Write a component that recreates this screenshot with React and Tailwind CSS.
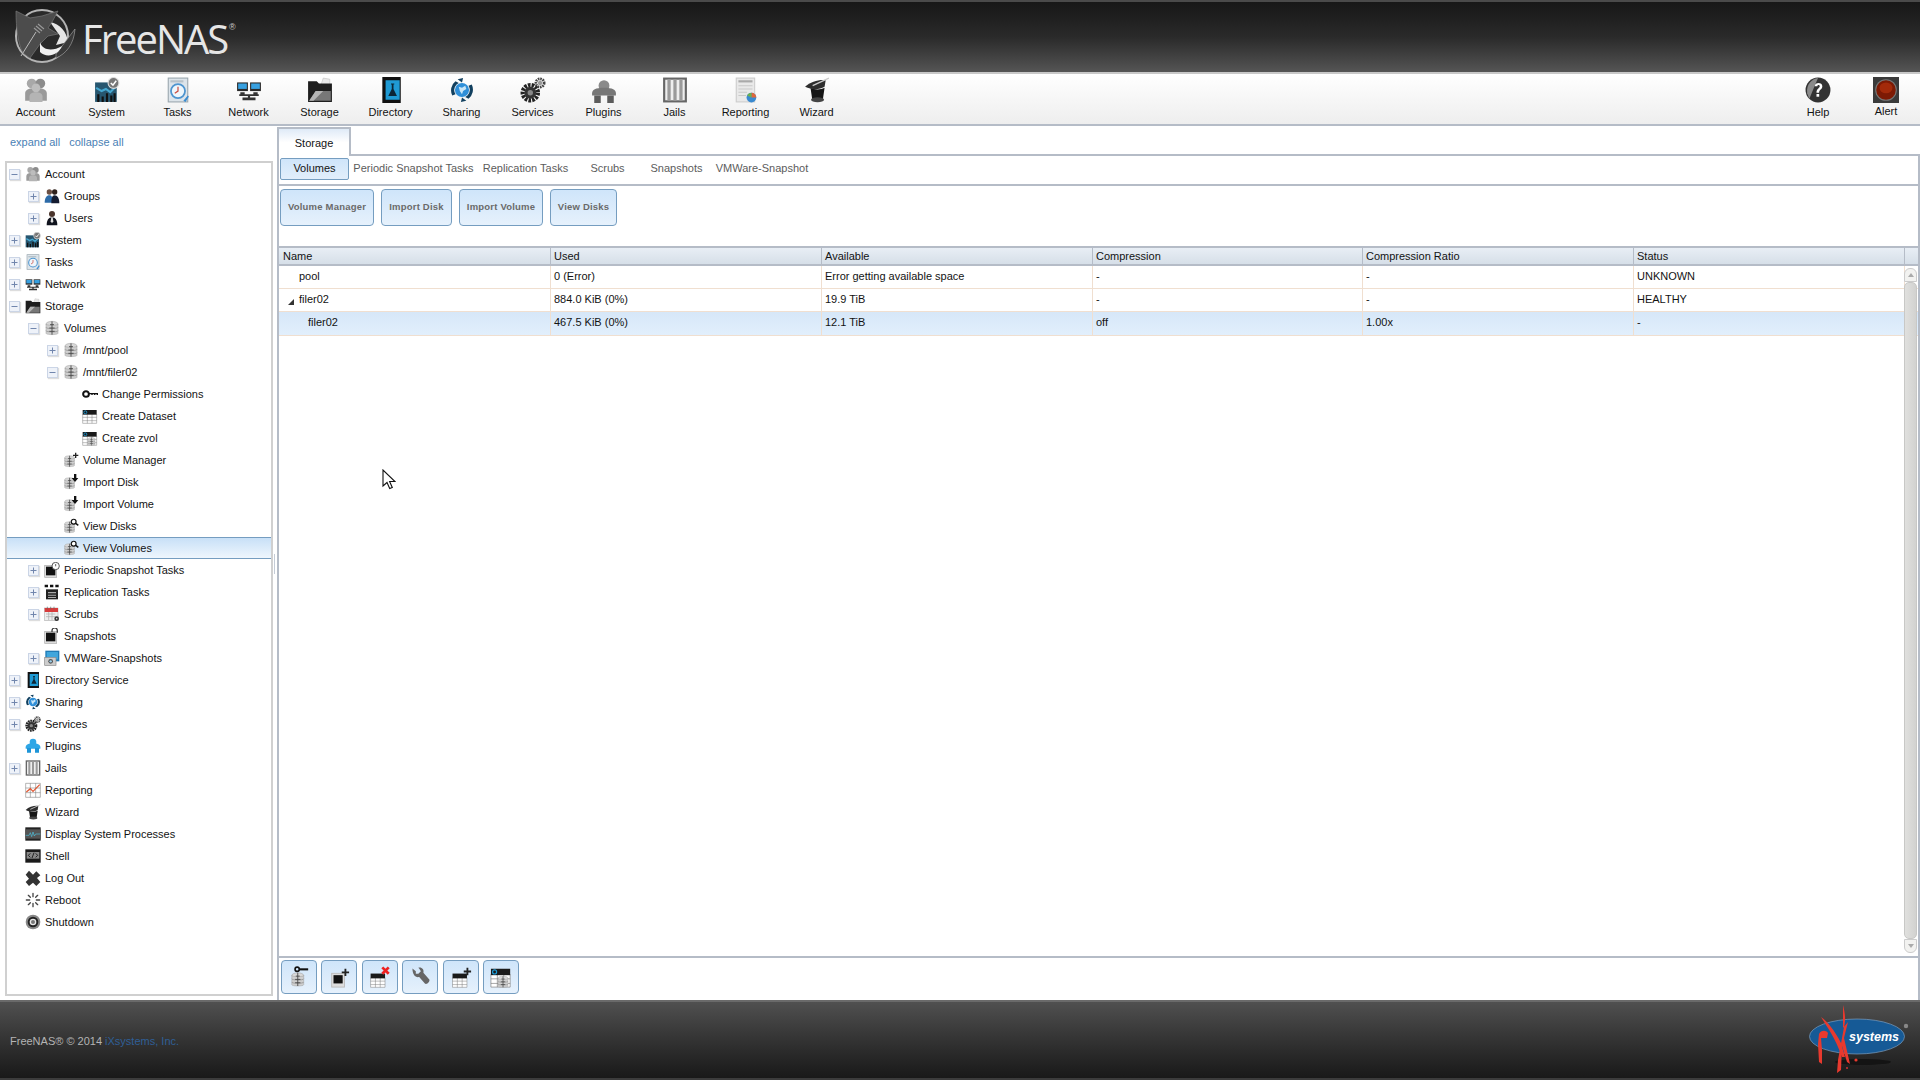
const ICONS = {
  account: (
    <>
      <circle cx="8" cy="6" r="4.5" fill="#a8a8a8" />
      <circle cx="16" cy="6" r="4.5" fill="#8c8c8c" />
      <path d="M2 22v-7c0-3 3-4.5 6-4.5s4 1 4 1 1-1 4-1 6 1.500 6 4.500v7z" fill="#9a9a9a" />
      <circle cx="12" cy="10" r="4" fill="#bdbdbd" />
      <path d="M6 23v-5c0-3 3-4 6-4s6 1 6 4v5z" fill="#b4b4b4" />
    </>
  ),
  groups: (
    <>
      <circle cx="8" cy="6" r="4" fill="#6b5044" />
      <circle cx="16" cy="6" r="4" fill="#30221c" />
      <path d="M1 22c0-7 3-11 7-11s5 3 5 11z" fill="#2d6ba8" />
      <path d="M11 23c0-7 1-12 5-12s7 4 7 12z" fill="#141c30" />
    </>
  ),
  users: (
    <>
      <circle cx="12" cy="6" r="4.500" fill="#4a352c" />
      <path d="M4 23c0-8 3-12 8-12s8 4 8 12z" fill="#10131d" />
      <path d="M11 11h2l1 6-2 3-2-3z" fill="#ddd" />
    </>
  ),
  system: (
    <>
      <rect x="1" y="5" width="20" height="18" fill="#27566f" />
      <path d="M2 10l5 3 4-2 4 3 5-5" stroke="#46a7d0" strokeWidth="2" fill="none" />
      <path d="M3 23v-7h2v7zM7 23v-5h2v5zM11 23v-8h2v8zM15 23v-6h2v6zM18 23v-8h2v8z" fill="#111" />
      <circle cx="18" cy="5.500" r="5" fill="#777" stroke="#ddd" />
      <path d="M15.500 5.500l2 2 3-4" stroke="#fff" strokeWidth="1.400" fill="none" />
    </>
  ),
  tasks: (
    <>
      <rect x="3" y="1" width="18" height="22" fill="#dce4ea" stroke="#9aa6ae" />
      <rect x="5" y="3" width="12" height="2" fill="#b8c2c9" />
      <circle cx="12" cy="13" r="6.500" fill="#eef6fb" stroke="#4d94cf" strokeWidth="1.600" />
      <path d="M12 9v4l-3 2" stroke="#cc4b3f" strokeWidth="1.100" fill="none" />
      <path d="M17 22l4-5 1 1-3 5z" fill="#3a8cd0" />
    </>
  ),
  network: (
    <>
      <rect x="1" y="5" width="10" height="8" fill="#2a2a2a" />
      <rect x="2" y="6" width="8" height="5" fill="#37a0e0" />
      <rect x="13" y="5" width="10" height="8" fill="#2a2a2a" />
      <rect x="14" y="6" width="8" height="5" fill="#37a0e0" />
      <path d="M4 14h4v2H4zM16 14h4v2h-4zM3 16h18v1.500H3zM11 17h2v2h-2zM6 19h12v2.500H6z" fill="#333" />
    </>
  ),
  storage: (
    <>
      <path d="M15 1l6 1v5h-8z" fill="#e8e8e8" stroke="#bbb" strokeWidth=".5" />
      <path d="M1 4h8l2 2h12v17H1z" fill="#1e1e1e" />
      <path d="M2 22l6-9h14v9z" fill="#777" />
      <path d="M2 22l6-9h7l-9 9z" fill="#b5b5b5" />
    </>
  ),
  directory: (
    <>
      <rect x="4" y="0" width="17" height="24" fill="#111" />
      <rect x="7" y="3" width="13" height="18" fill="#1f9ad4" />
      <path d="M12 6h3v1h-.700v4l3.200 6.500h-8L12.700 11V7H12z" fill="#0c2636" />
    </>
  ),
  sharing: (
    <>
      <circle cx="12" cy="12" r="6.500" fill="#2f8fd8" />
      <path d="M9 9l3 1 3-2 1 3-3 2-1 3-2-3z" fill="#c9e6f7" />
      <path d="M3 17a10.500 10.500 0 0 1 3-13l3 1.500-2 1.500a7.500 7.500 0 0 0-1 9zM21 7a10.500 10.500 0 0 1-3 13l-3-1.500 2-1.500a7.500 7.500 0 0 0 1-9z" fill="#12405f" />
      <path d="M8 2l5-1-1 4zM16 22l-5 1 1-4z" fill="#12405f" />
    </>
  ),
  services: (
    <>
      <circle cx="9.500" cy="14.500" r="7" fill="none" stroke="#222" strokeWidth="4" strokeDasharray="2.400 1" />
      <circle cx="9.500" cy="14.500" r="5.500" fill="#333" />
      <circle cx="9.500" cy="14.500" r="2.500" fill="#888" />
      <circle cx="18.500" cy="5.500" r="3.800" fill="none" stroke="#444" strokeWidth="2.500" strokeDasharray="1.500 .7" />
      <circle cx="18.500" cy="5.500" r="2" fill="#999" />
    </>
  ),
  plugins: (
    <>
      <circle cx="12" cy="8" r="5" fill="#8a8a8a" />
      <path d="M1 15c0-3 3-5 11-5s11 2 11 5v2H1z" fill="#777" />
      <path d="M3 17h6v7H3zM15 17h6v7h-6z" fill="#5c5c5c" />
    </>
  ),
  pluginsTree: (
    <>
      <circle cx="12" cy="6" r="5" fill="#2ea6e6" />
      <path d="M1 14c0-3 3-6 11-6s11 3 11 6v2H1z" fill="#2ea6e6" />
      <path d="M3 15h6v7H3zM15 15h6v7h-6z" fill="#1e95d8" />
    </>
  ),
  jails: (
    <>
      <rect x="1" y="0.500" width="22" height="23" fill="#666" />
      <rect x="3" y="2.500" width="18" height="19" fill="#eee" />
      <path d="M5 2h3v20H5zM10.500 2h3v20h-3zM16 2h3v20h-3z" fill="#9a9a9a" />
    </>
  ),
  report: (
    <>
      <rect x="3" y="1" width="17" height="22" fill="#e9e9e9" stroke="#ccc" />
      <rect x="5" y="3" width="13" height="2" fill="#aaa" />
      <path d="M5 8h13M5 11h13M5 14h8M5 17h7" stroke="#c9c9c9" />
      <circle cx="17" cy="19" r="4.500" fill="#3a8ad0" />
      <path d="M17 19v-4.500a4.500 4.500 0 0 1 4.500 4.500z" fill="#e0663a" />
      <path d="M17 19l-4-2a4.500 4.500 0 0 1 4-2.500z" fill="#6db14a" />
    </>
  ),
  reportTree: (
    <>
      <path d="M1 2h22v21H1zM1 9h22M1 16h22M8 2v21M16 2v21" fill="#fff" stroke="#777" strokeWidth=".8" />
      <path d="M2 15l6-5 4 4 10-10" stroke="#e2552f" strokeWidth="1.800" fill="none" />
    </>
  ),
  wizard: (
    <>
      <path d="M6 10c4 2 9 2 13 0l-1.500 10c-3 2.500-7 2.500-10 0z" fill="#161616" />
      <ellipse cx="12.500" cy="21" rx="6" ry="2.200" fill="#444" />
      <path d="M1 9c5-5 14-7 19-6l-1 6c-5 3-12 3-18 0z" fill="#2e2e2e" />
      <path d="M8 8L23 1" stroke="#ccc" strokeWidth="1.300" />
    </>
  ),
  db: <Db />,
  key: (
    <>
      <circle cx="6" cy="12" r="4.300" fill="none" stroke="#111" strokeWidth="3" />
      <path d="M10 10.500h14v3h-2v-1h-2v1h-2v-1h-2v1h-2v-1h-4z" fill="#111" />
    </>
  ),
  dataset: <Table dot />,
  zvol: (
    <>
      <Table dot />
      <g transform="translate(7 10) scale(.6)">
        <Db />
      </g>
    </>
  ),
  dbPlus: (
    <>
      <g transform="translate(0 4) scale(.82)">
        <Db />
      </g>
      <path d="M18 1h2v3h3v2h-3v3h-2V6h-3V4h3z" fill="#222" />
    </>
  ),
  dbDown: (
    <>
      <g transform="translate(0 4) scale(.82)">
        <Db />
      </g>
      <path d="M16.500 0h3.500v6h3l-5 6-5-6h3.500z" fill="#111" />
    </>
  ),
  dbView: (
    <>
      <g transform="translate(0 4) scale(.82)">
        <Db />
      </g>
      <circle cx="16" cy="5.500" r="3.600" fill="#fff" stroke="#111" strokeWidth="1.800" />
      <path d="M19 8l4 3" stroke="#111" strokeWidth="2.200" />
    </>
  ),
  snapTask: (
    <>
      <rect x="1" y="5" width="18" height="18" fill="#ddd" stroke="#aaa" />
      <path d="M3 7h14v13L3 20z" fill="#111" />
      <circle cx="17.500" cy="6" r="5.500" fill="#fff" stroke="#333" strokeWidth="1.200" />
      <path d="M17.500 3v3.500" stroke="#111" />
    </>
  ),
  repl: (
    <>
      <path d="M1 1h5v4H1zM9 1h5v4H9zM17 1h5v4h-5z" fill="#111" />
      <rect x="3" y="8" width="18" height="15" fill="#222" />
      <path d="M6 12h12v2H6zM6 16h12v1.500H6zM6 19.500h12V21H6z" fill="#aaa" />
    </>
  ),
  scrubs: (
    <>
      <rect x="1" y="3" width="20" height="19" fill="#eee" stroke="#999" strokeWidth=".7" />
      <rect x="1" y="3" width="20" height="6" fill="#d83b3b" />
      <path d="M5 1v4M10 1v4M15 1v4" stroke="#666" />
      <path d="M3 12h14M3 16h14M7 9v12M12 9v12" stroke="#aaa" />
      <circle cx="19" cy="19" r="3.500" fill="#333" />
      <circle cx="19" cy="19" r="1.200" fill="#ccc" />
    </>
  ),
  snapshot: (
    <>
      <rect x="1" y="5" width="18" height="18" fill="#ddd" stroke="#aaa" />
      <path d="M3 7h14v13H3z" fill="#111" />
      <path d="M12 6V4a4 4 0 0 1 8 0v3" fill="none" stroke="#333" strokeWidth="1.800" />
    </>
  ),
  vmware: (
    <>
      <rect x="2" y="1" width="21" height="16" fill="#1f7bb6" />
      <path d="M4 3h17v11H4z" fill="#3fa6dc" />
      <rect x="1" y="11" width="17" height="12" fill="#ccc" stroke="#888" />
      <circle cx="10" cy="17" r="3.500" fill="#555" />
      <circle cx="10" cy="17" r="1.800" fill="#9fd3f0" />
    </>
  ),
  processes: (
    <>
      <rect x="0.500" y="2" width="23" height="20" fill="#222" />
      <rect x="0.500" y="5" width="23" height="14" fill="#555" />
      <path d="M1 14h5l2-4 2 6 2-7 2 6 2-3h7" stroke="#4ec3e0" fill="none" />
    </>
  ),
  shell: (
    <>
      <rect x="0.500" y="2" width="23" height="20" fill="#1a1a1a" />
      <rect x="2.500" y="6" width="19" height="10" fill="#888" />
      <path d="M8 8l-3 3 3 3M16 8l3 3-3 3M13.500 7l-3 8" stroke="#111" strokeWidth="1.300" fill="none" />
    </>
  ),
  logout: <path d="M6 1l6 6 5-5 6 6-5 4 5 6-6 6-5-5-6 5-5-6 5-5-5-6z" fill="#333" />,
  reboot: (
    <g stroke="#444" strokeWidth="2" strokeLinecap="round">
      <path d="M12 2v5M12 17v5M2 12h5M17 12h5M5 5l3 3M16 16l3 3M19 5l-3 3M8 16l-3 3" />
    </g>
  ),
  shutdown: (
    <>
      <circle cx="12" cy="12" r="11" fill="#888" />
      <circle cx="12" cy="12" r="8" fill="#222" />
      <circle cx="12" cy="12" r="5" fill="#e8e8e8" />
      <circle cx="12" cy="12" r="3" fill="#777" />
    </>
  ),
  help: (
    <>
      <circle cx="12" cy="12" r="11.500" fill="#333" />
      <path d="M2 15C1 7 6 2 12 1L4 20z" fill="#8a8a8a" />
      <path d="M9 8.500c0-4 7-4 7 0 0 3-3 3-3 6h-2.400c0-4 3-4 3-6 0-1.600-2.200-1.600-2.200 0z" fill="#fff" />
      <rect x="10.600" y="15.700" width="2.500" height="2.500" fill="#fff" />
    </>
  ),
  alert: (
    <>
      <rect width="24" height="24" fill="#3a3a3a" />
      <circle cx="12" cy="12" r="10" fill="#777" />
      <circle cx="12" cy="12" r="9" fill="#7d1a04" />
      <ellipse cx="12" cy="10" rx="6" ry="5" fill="#a32a0a" />
    </>
  ),
  toolKey: (
    <>
      <g transform="translate(2 6) scale(.72)">
        <Db />
      </g>
      <circle cx="10" cy="3.500" r="2.300" fill="none" stroke="#111" strokeWidth="1.800" />
      <path d="M12 2.500h10v2.300H12z" fill="#111" />
    </>
  ),
  toolSnap: (
    <>
      <rect x="4" y="8" width="14" height="15" fill="#ddd" stroke="#bbb" />
      <rect x="6" y="10" width="10" height="9" fill="#111" />
      <path d="M18 3h2v3h3v2h-3v3h-2V8h-3V6h3z" fill="#222" />
    </>
  ),
  toolDel: (
    <>
      <g transform="translate(1 6) scale(.75)">
        <Table />
      </g>
      <path d="M14.500 1.500l7 7M21.500 1.500l-7 7" stroke="#ee2222" strokeWidth="3" />
    </>
  ),
  wrench: <path d="M3 2l4 3v3l3 0 3-3c-1-2-3-4-3-4 4-1 7 2 6 6l7 8c1 2-2 6-5 5l-7-8c-4 1-8-2-8-10z" fill="#666" transform="translate(1 1) scale(.92)" />,
  toolAdd: (
    <>
      <g transform="translate(2 6) scale(.75)">
        <Table />
      </g>
      <path d="M18 2h2v3h3v2h-3v3h-2V7h-3V5h3z" fill="#222" />
    </>
  ),
};

function Db() {
  return (
    <g>
      <ellipse cx="12" cy="6" rx="9" ry="4" fill="#d8d8d8" stroke="#999" strokeWidth=".7" />
      <path d="M3 6v14c0 2.500 18 2.500 18 0V6c0 2.500-18 2.500-18 0z" fill="#cfcfcf" stroke="#999" strokeWidth=".7" />
      <path d="M3 11c0 2.500 18 2.500 18 0M3 16c0 2.500 18 2.500 18 0" fill="none" stroke="#888" />
      <path d="M12 2v20M8 12h8M8 17h8M9 7h6" stroke="#444" strokeWidth="1.300" />
    </g>
  );
}

function Table({ dot }) {
  return (
    <g>
      <rect x="1" y="9" width="21" height="14" fill="#fff" />
      <path d="M1 9v14h21V9M1 14h21M1 19h21M8 9v14M15 9v14" fill="none" stroke="#777" strokeWidth=".7" />
      <rect x="1" y="3" width="21" height="7" fill="#1a1a1a" />
      {dot ? <circle cx="5" cy="6.500" r="2.200" fill="#1a1a1a" stroke="#1d9bd6" strokeWidth="1.300" /> : null}
    </g>
  );
}

function Icon({ name, size = 16 }) {
  return (
    <svg viewBox="0 0 24 24" width={size} height={size} className="shrink-0">
      {ICONS[name]}
    </svg>
  );
}

const MENU = [
  ['Account', 'account'],
  ['System', 'system'],
  ['Tasks', 'tasks'],
  ['Network', 'network'],
  ['Storage', 'storage'],
  ['Directory', 'directory'],
  ['Sharing', 'sharing'],
  ['Services', 'services'],
  ['Plugins', 'plugins'],
  ['Jails', 'jails'],
  ['Reporting', 'report'],
  ['Wizard', 'wizard'],
];

// depth, expander, icon, label
const TREE = [
  [0, '-', 'account', 'Account'],
  [1, '+', 'groups', 'Groups'],
  [1, '+', 'users', 'Users'],
  [0, '+', 'system', 'System'],
  [0, '+', 'tasks', 'Tasks'],
  [0, '+', 'network', 'Network'],
  [0, '-', 'storage', 'Storage'],
  [1, '-', 'db', 'Volumes'],
  [2, '+', 'db', '/mnt/pool'],
  [2, '-', 'db', '/mnt/filer02'],
  [3, '', 'key', 'Change Permissions'],
  [3, '', 'dataset', 'Create Dataset'],
  [3, '', 'zvol', 'Create zvol'],
  [2, '', 'dbPlus', 'Volume Manager'],
  [2, '', 'dbDown', 'Import Disk'],
  [2, '', 'dbDown', 'Import Volume'],
  [2, '', 'dbView', 'View Disks'],
  [2, '', 'dbView', 'View Volumes', true],
  [1, '+', 'snapTask', 'Periodic Snapshot Tasks'],
  [1, '+', 'repl', 'Replication Tasks'],
  [1, '+', 'scrubs', 'Scrubs'],
  [1, '', 'snapshot', 'Snapshots'],
  [1, '+', 'vmware', 'VMWare-Snapshots'],
  [0, '+', 'directory', 'Directory Service'],
  [0, '+', 'sharing', 'Sharing'],
  [0, '+', 'services', 'Services'],
  [0, '', 'pluginsTree', 'Plugins'],
  [0, '+', 'jails', 'Jails'],
  [0, '', 'reportTree', 'Reporting'],
  [0, '', 'wizard', 'Wizard'],
  [0, '', 'processes', 'Display System Processes'],
  [0, '', 'shell', 'Shell'],
  [0, '', 'logout', 'Log Out'],
  [0, '', 'reboot', 'Reboot'],
  [0, '', 'shutdown', 'Shutdown'],
];

const SUBTABS = [
  ['Periodic Snapshot Tasks', 'w-[129px]'],
  ['Replication Tasks', 'w-[95px]'],
  ['Scrubs', 'w-[69px]'],
  ['Snapshots', 'w-[69px]'],
  ['VMWare-Snapshot', 'w-[102px]'],
];

const BUTTONS = [
  ['Volume Manager', 'w-[94px]'],
  ['Import Disk', 'w-[71px]'],
  ['Import Volume', 'w-[84px]'],
  ['View Disks', 'w-[67px]'],
];

const COLUMNS = ['Name', 'Used', 'Available', 'Compression', 'Compression Ratio', 'Status'];

const ROWS = [
  { h: 'h-[23px]', pad: 'pl-[20px]', cells: ['pool', '0 (Error)', 'Error getting available space', '-', '-', 'UNKNOWN'] },
  { h: 'h-[23px]', pad: 'pl-[20px]', open: true, cells: ['filer02', '884.0 KiB (0%)', '19.9 TiB', '-', '-', 'HEALTHY'] },
  { h: 'h-[24px]', pad: 'pl-[29px]', selected: true, cells: ['filer02', '467.5 KiB (0%)', '12.1 TiB', 'off', '1.00x', '-'] },
];

const TOOLS = ['toolKey', 'toolSnap', 'toolDel', 'wrench', 'toolAdd', 'zvol'];

const GRID = 'grid grid-cols-[272px_271px_271px_270px_271px_271px_1fr]';

function Expander({ kind }) {
  return (
    <span className="flex h-[11px] w-[11px] shrink-0 items-center justify-center border border-[#cbd5e6] bg-[#eef2f9] shadow-[1px_1px_1px_#ddd]">
      <svg viewBox="0 0 9 9" width="9" height="9">
        <path d={kind === '+' ? 'M1.500 4.500h6M4.500 1.500v6' : 'M1.500 4.500h6'} stroke="#7186ad" />
      </svg>
    </span>
  );
}

function TreeRow({ depth, expander, icon, label, selected }) {
  const pads = ['pl-[2px]', 'pl-[21px]', 'pl-[40px]', 'pl-[59px]'];
  return (
    <div
      className={`flex h-[22px] items-center ${pads[depth]} ${
        selected ? 'border-y border-[#759dc0] bg-gradient-to-b from-[#c8e0f7] to-[#eef6fd]' : ''
      }`}
    >
      <span className="flex w-[16px] shrink-0 items-center">{expander ? <Expander kind={expander} /> : null}</span>
      <Icon name={icon} />
      <span className="ml-[4px] whitespace-nowrap text-[11px] text-[#131313]">{label}</span>
    </div>
  );
}

function Logo() {
  return (
    <svg viewBox="0 0 66 60" width="66" height="60" className="absolute left-[12px] top-[6px]">
      <circle cx="30" cy="28" r="26" fill="#2a2a2a" stroke="#b4b4b4" strokeWidth="2" />
      <path d="M38 14C48 16 55 24 56 34L44 37 48 28z" fill="#e6e6e6" />
      <path d="M4 3L18 10 30 8 46 3 40 14 36 20 46 26 36 28 28 36 18 50 11 45C6 36 4 20 4 3z" fill="#4c4c4c" stroke="#777" strokeWidth=".7" />
      <path d="M44 46L63 21C62 36 54 46 44 50z" fill="#3a3a3a" stroke="#999" strokeWidth=".7" />
      <path d="M28 34C30 42 40 44 50 38 46 48 34 50 28 44z" fill="#f0f0f0" />
      <path d="M9 48L24 24" stroke="#bbb" strokeWidth="1" />
      <path d="M22 20l6 5M24 18l6 5M26 16l6 5" stroke="#999" strokeWidth="1.100" />
    </svg>
  );
}

function IxLogo() {
  return (
    <svg viewBox="0 0 110 76" width="110" height="76" className="absolute right-[7px] top-[3px]">
      <ellipse cx="60" cy="57" rx="28" ry="3" fill="#141414" />
      <ellipse cx="54" cy="31.500" rx="47.500" ry="17.500" fill="#165a96" stroke="#7c9cbc" strokeWidth=".7" />
      <text x="46" y="36" fontFamily="Liberation Sans, sans-serif" fontStyle="italic" fontWeight="700" fontSize="12.500" fill="#fff">
        systems
      </text>
      <path d="M40 0c2 8 3 14 1 22L35 55l-1 13 4-3 1-24 5 16 3 2-6-26 4-16-5 6z" fill="#e8392e" />
      <path d="M18 12c6 4 14 14 20 26l4 14-3 0C32 32 24 22 18 12z" fill="#e8392e" />
      <path d="M16 29c2-4 7-4 9-1l-1 5h-6l1 12 0 14-3-2-1-18z" fill="#e8392e" />
      <circle cx="53" cy="55" r="1.600" fill="#e8392e" />
      <circle cx="44" cy="63" r="1" fill="#c33" />
      <circle cx="103" cy="21" r="2.200" fill="#888" />
    </svg>
  );
}

export default function App() {
  return (
    <div className="relative flex h-[1080px] w-[1920px] flex-col overflow-hidden bg-white [font-family:'Liberation_Sans',Arial,sans-serif]">
      <header className="relative h-[72px] shrink-0 border-t-2 border-[#4a4a4a] bg-gradient-to-b from-[#171717] via-[#2a2a2a] to-[#555555]">
        <Logo />
        <span className="absolute left-[82px] top-[10px] text-[40px] leading-[54px] tracking-[-2px] text-[#e6e6e6] [font-family:'Open_Sans',sans-serif]">
          FreeNAS
        </span>
        <span className="absolute left-[229px] top-[19px] text-[9px] text-[#ccc]">®</span>
      </header>

      <nav className="flex h-[54px] shrink-0 border-y-2 border-t-[#c8c8c8] border-b-[#b5bcc7] bg-gradient-to-b from-white to-[#eeeeee]">
        {MENU.map(([label, icon]) => (
          <div key={label} className="flex w-[71px] flex-col items-center pt-[3px]">
            <Icon name={icon} size={26} />
            <span className="mt-[2px] text-[11px] leading-[14px] text-[#131313]">{label}</span>
          </div>
        ))}
        <div className="ml-auto flex">
          <div className="flex w-[68px] flex-col items-center pt-[3px]">
            <Icon name="help" size={26} />
            <span className="mt-[2px] text-[11px] leading-[14px] text-[#131313]">Help</span>
          </div>
          <div className="flex w-[68px] flex-col items-center pt-[3px]">
            <Icon name="alert" size={26} />
            <span className="mt-[1px] text-[11px] leading-[14px] text-[#131313]">Alert</span>
          </div>
        </div>
      </nav>

      <main className="flex min-h-0 flex-1">
        <aside className="relative flex w-[277px] shrink-0 flex-col pl-[5px] pr-[5px]">
          <div className="flex h-[35px] shrink-0 items-center gap-[9px] pb-[2px] pl-[5px] text-[11px] text-[#4a7fb5]">
            <span>expand all</span>
            <span>collapse all</span>
          </div>
          <div className="h-[835px] w-[268px] border-2 border-[#d0d0d0] border-t-[#cfcfcf]">
            {TREE.map(([depth, expander, icon, label, selected]) => (
              <TreeRow key={label} depth={depth} expander={expander} icon={icon} label={label} selected={selected} />
            ))}
          </div>
          <span className="absolute right-[2px] top-[428px] h-[20px] w-[1px] bg-[#c5ccd6]" />
        </aside>

        <section className="flex min-w-0 flex-1 flex-col pt-[1px]">
          <div className="flex h-[29px] shrink-0 border-b-2 border-[#b5bcc7]">
            <div className="flex h-[29px] w-[74px] items-center justify-center border-x-2 border-t-2 border-[#b5bcc7] bg-gradient-to-b from-[#dfeaf7] via-white to-white pt-[2px] text-[11px] text-[#131313]">
              Storage
            </div>
          </div>
          <div className="flex min-h-0 flex-1 flex-col border-x-2 border-[#b5bcc7]">
            <div className="flex h-[30px] shrink-0 items-start border-b-2 border-[#b5bcc7] pl-[1px] pt-[2px]">
              <div className="flex h-[22px] w-[69px] items-center justify-center rounded-[2px] border border-[#759dc0] bg-gradient-to-b from-[#cfe5fa] to-[#e2eefb] pb-[1px] text-[11px] text-[#131313]">
                Volumes
              </div>
              {SUBTABS.map(([label, width]) => (
                <div key={label} className={`${width} text-center text-[11px] leading-[20px] text-[#5c5c5c]`}>
                  {label}
                </div>
              ))}
            </div>

            <div className="flex h-[60px] shrink-0 gap-[7px] pl-[1px] pt-[3px]">
              {BUTTONS.map(([label, width]) => (
                <div
                  key={label}
                  className={`${width} flex h-[37px] items-center justify-center rounded-[4px] border border-[#759dc0] bg-gradient-to-b from-[#cfe5fa] to-[#e6f1fc] text-[9.500px] font-bold tracking-[0.2px] text-[#6a6a6a]`}
                >
                  {label}
                </div>
              ))}
            </div>

            <div className="relative min-h-0 flex-1 border-y-2 border-[#b5bcc7]">
              <div className={`${GRID} h-[18px] items-center border-b-2 border-[#b5bcc7] bg-gradient-to-b from-[#e8eef5] to-[#d6dfe8] text-[11px] text-[#131313]`}>
                {COLUMNS.map((col, i) => (
                  <div key={col} className={`flex h-full items-center border-r border-[#b5bcc7] ${i === 0 ? 'pl-[4px]' : 'pl-[3px]'}`}>
                    {col}
                  </div>
                ))}
                <div />
              </div>
              {ROWS.map((row) => (
                <div
                  key={row.cells[1]}
                  className={`${GRID} ${row.h} border-b border-[#f0dfd0] text-[11px] text-[#131313] ${
                    row.selected ? 'bg-gradient-to-b from-[#d6e7f8] to-[#e2effc]' : ''
                  }`}
                >
                  {row.cells.map((cell, i) => (
                    <div
                      key={i}
                      className={`relative flex items-center border-r border-[#f0dfd0] pb-[2px] ${i === 0 ? row.pad : 'pl-[3px]'}`}
                    >
                      {i === 0 && row.open ? (
                        <svg viewBox="0 0 6 6" width="6" height="6" className="absolute left-[9px] top-[10px]">
                          <path d="M6 0v6H0z" fill="#333" />
                        </svg>
                      ) : null}
                      {cell}
                    </div>
                  ))}
                  <div />
                </div>
              ))}
              <div className="absolute bottom-[3px] right-[1px] top-[20px] flex w-[13px] flex-col items-center">
                <div className="flex h-[14px] w-full items-center justify-center rounded-t-[6px] border border-[#ccc] bg-[#f2f2f0]">
                  <svg viewBox="0 0 6 4" width="6" height="4">
                    <path d="M3 0l3 4H0z" fill="#aaa" />
                  </svg>
                </div>
                <div className="flex-1 self-stretch rounded-[5px] border border-[#c8c8c6] bg-gradient-to-r from-[#e0e0de] to-[#d2d2d0]" />
                <div className="flex h-[14px] w-full items-center justify-center rounded-b-[6px] border border-[#ccc] bg-[#f2f2f0]">
                  <svg viewBox="0 0 6 4" width="6" height="4">
                    <path d="M3 4L0 0h6z" fill="#aaa" />
                  </svg>
                </div>
              </div>
            </div>

            <div className="flex h-[42px] shrink-0 gap-[4.400px] pl-[2px] pt-[2px]">
              {TOOLS.map((tool) => (
                <div
                  key={tool}
                  className="flex h-[34px] w-[36px] items-center justify-center rounded-[4px] border border-[#759dc0] bg-gradient-to-b from-[#cfe5fa] to-[#e6f1fc]"
                >
                  <Icon name={tool} size={22} />
                </div>
              ))}
            </div>
          </div>
        </section>
      </main>

      <footer className="relative flex h-[80px] shrink-0 items-center border-b-2 border-t-2 border-t-[#6a6a6a] border-b-[#3c3c3c] bg-gradient-to-b from-[#505050] to-[#191919] pl-[10px] pt-[2px] text-[11px] text-[#b4b4b4]">
        <span>
          FreeNAS® © 2014 <span className="text-[#2f5f96]">iXsystems, Inc.</span>
        </span>
        <IxLogo />
      </footer>

      {/* mouse pointer caught in the screenshot */}
      <svg viewBox="0 0 14 21" width="14" height="21" className="absolute left-[382px] top-[469px]">
        <path d="M1 1v16l4-3.500 2.700 6 2.600-1.100-2.700-5.900h5.400z" fill="#fff" stroke="#111" strokeWidth="1.100" />
      </svg>
    </div>
  );
}
